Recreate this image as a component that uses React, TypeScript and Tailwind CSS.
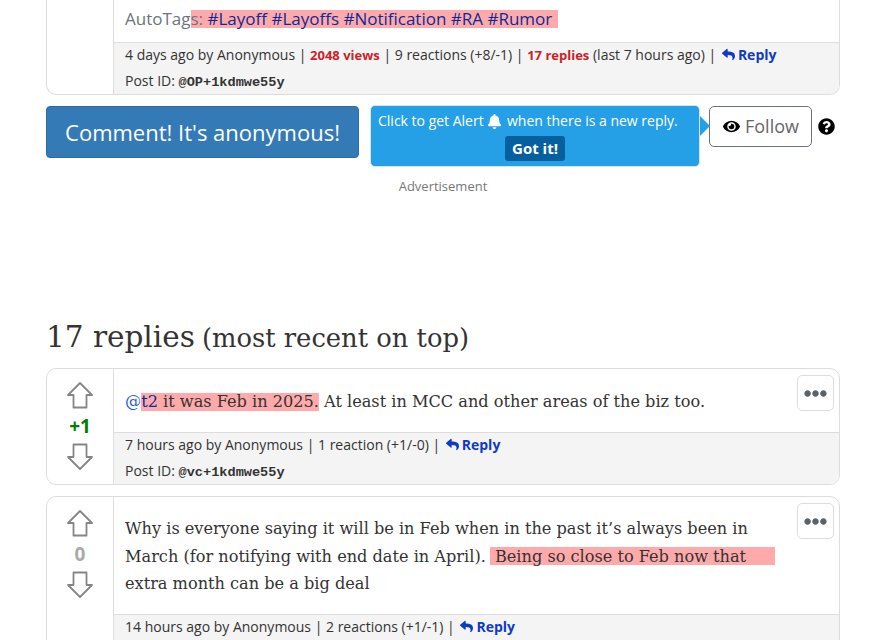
import { FaReply, FaBell, FaEye, FaQuestionCircle, FaEllipsisH } from "react-icons/fa";
import type { ReactNode } from "react";

const hl = "bg-[linear-gradient(#ffaaaa,#ffaaaa)] bg-no-repeat bg-[length:100%_18px] bg-center";
const serif = "font-['DejaVu_Serif',serif]";

function ReplyLink() {
  return (
    <b className="ml-[2px] text-[#0d3bc4]">
      <FaReply className="mr-[3px] inline-block align-[-1px] text-[13px]" />
      Reply
    </b>
  );
}

function Meta({ children, id }: { children: ReactNode; id?: string }) {
  return (
    <div className="h-full border-t border-[#dddddd] bg-[#f4f4f4] px-[11px] text-[14px] text-[#333333]">
      <div className="h-[26px] leading-[24px]">{children}</div>
      {id && (
        <div className="h-[26px] leading-[24px]">
          Post ID: <span className="font-['Liberation_Mono',monospace] text-[13.6px] font-bold">{id}</span>
        </div>
      )}
    </div>
  );
}

function Arrow({ down }: { down?: boolean }) {
  return (
    <svg width="26" height="27" viewBox="0 0 26 27" fill="none" className={down ? "rotate-180" : ""}>
      <path
        d="M13 1 L25 13 H19.5 V25.5 H6.5 V13 H1 Z"
        stroke="#858585"
        strokeWidth="1.8"
        strokeLinejoin="round"
      />
    </svg>
  );
}

function Vote({ score, tone }: { score: string; tone: string }) {
  return (
    <div className="flex w-[67px] shrink-0 flex-col items-center border-r border-[#dddddd] pt-[13px]">
      <Arrow />
      <div className={`text-[19px] font-bold leading-[34px] ${tone}`}>{score}</div>
      <Arrow down />
    </div>
  );
}

function Dots() {
  return (
    <div className="absolute right-[5px] top-[6px] flex h-[36px] w-[37px] items-center justify-center rounded-[5px] border border-[#dddddd] bg-white text-[#5a6268]">
      <FaEllipsisH className="text-[23px]" />
    </div>
  );
}

export default function App() {
  return (
    <div className="h-[640px] w-[887px] overflow-hidden bg-white pl-[46px] pr-[47px] font-['Open_Sans',sans-serif]">
      {/* opening post, scrolled partly off the top */}
      <div className="-mt-px flex h-[96px] overflow-hidden rounded-b-[10px] border border-t-0 border-[#dddddd]">
        <div className="w-[67px] shrink-0 border-r border-[#dddddd]" />
        <div className="flex min-w-0 flex-1 flex-col">
          <div className="h-[43px] shrink-0 px-[11px] pt-[7px] text-[17px] leading-[26px] text-[#6c757d]">
            AutoTag
            <span className={`${hl} pr-[6px]`}>
              s: <span className="text-[#0a2a9c]">#Layoff #Layoffs #Notification #RA #Rumor</span>
            </span>
          </div>
          <div className="flex-1">
            <Meta id="@OP+1kdmwe55y">
              4 days ago by Anonymous | <b className="text-[13px] text-[#cc2229]">2048 views</b> | 9 reactions (+8/-1) |{" "}
              <b className="text-[13px] text-[#cc2229]">17 replies</b> (last 7 hours ago) | <ReplyLink />
            </Meta>
          </div>
        </div>
      </div>

      {/* actions */}
      <div className="mt-[11px] flex items-start">
        <div className="flex h-[52px] w-[313px] items-center justify-center rounded-[4px] border border-[#2e6da4] bg-[#337ab7] text-[22px] text-white">
          Comment! It's anonymous!
        </div>
        <div className="relative -mt-px ml-[11px] flex h-[62px] w-[330px] flex-col items-center rounded-[5px] border border-[#d5e6f2] bg-[#259fe6] pt-[5px] text-white">
          <div className="flex items-center self-start whitespace-pre pl-[7px] text-[14px] leading-[20px]">
            Click to get Alert <FaBell className="mr-[1px] text-[15px]" /> when there is a new reply.
          </div>
          <div className="mt-[5px] flex h-[25px] w-[60px] items-center justify-center rounded-[3px] bg-[#06609e] text-[15px] font-bold">
            Got it!
          </div>
          <div className="absolute -right-[11px] top-[10px] h-0 w-0 border-y-[10px] border-l-[10px] border-y-transparent border-l-[#259fe6]" />
        </div>
        <div className="ml-[9px] flex h-[41px] w-[103px] items-center justify-center gap-[5px] rounded-[5px] border border-[#6c757d] text-[18px] text-[#666666]">
          <FaEye className="ml-[1px] text-[17px] text-black" /> Follow
        </div>
        <FaQuestionCircle className="ml-[6px] mt-[12px] text-[17px] text-black" />
      </div>

      <div className="mt-[10px] text-center text-[13px] leading-[18px] text-[#777777]">Advertisement</div>

      <h2 className={`mt-[122px] h-[40px] leading-[40px] text-[#333333] ${serif}`}>
        <span className="text-[29.5px]">17 replies</span>{" "}
        <span className="ml-[2px] text-[25.8px]">(most recent on top)</span>
      </h2>

      {/* reply 1 */}
      <div className="relative mt-[11px] flex h-[117px] overflow-hidden rounded-[10px] border border-[#dddddd]">
        <Vote score="+1" tone="text-[#008000]" />
        <div className="flex min-w-0 flex-1 flex-col">
          <div className={`h-[63px] shrink-0 px-[11px] pt-[19px] text-[16.15px] leading-[27px] text-[#333333] ${serif}`}>
            <span className="text-[#2a62d4]">@</span>
            <span className={hl}>
              <span className="text-[#0a2a9c]">t2</span> it was Feb in 2025.
            </span>{" "}
            At least in MCC and other areas of the biz too.
          </div>
          <div className="flex-1">
            <Meta id="@vc+1kdmwe55y">
              7 hours ago by Anonymous | 1 reaction (+1/-0) | <ReplyLink />
            </Meta>
          </div>
        </div>
        <Dots />
      </div>

      {/* reply 2 */}
      <div className="relative mt-[11px] flex h-[180px] overflow-hidden rounded-[10px] border border-[#dddddd]">
        <Vote score="0" tone="text-[#aaaaaa]" />
        <div className="flex min-w-0 flex-1 flex-col">
          <div className={`h-[117px] shrink-0 px-[11px] pt-[18px] text-[16.15px] leading-[27.5px] text-[#333333] ${serif}`}>
            Why is everyone saying it will be in Feb when in the past it’s always been in
            <br />
            March (for notifying with end date in April).
            <span className={`${hl} ml-[4px] pr-[29px]`}> Being so close to Feb now that</span>
            <br />
            extra month can be a big deal
          </div>
          <div className="flex-1">
            <Meta>
              14 hours ago by Anonymous | 2 reactions (+1/-1) | <ReplyLink />
            </Meta>
          </div>
        </div>
        <Dots />
      </div>
    </div>
  );
}
